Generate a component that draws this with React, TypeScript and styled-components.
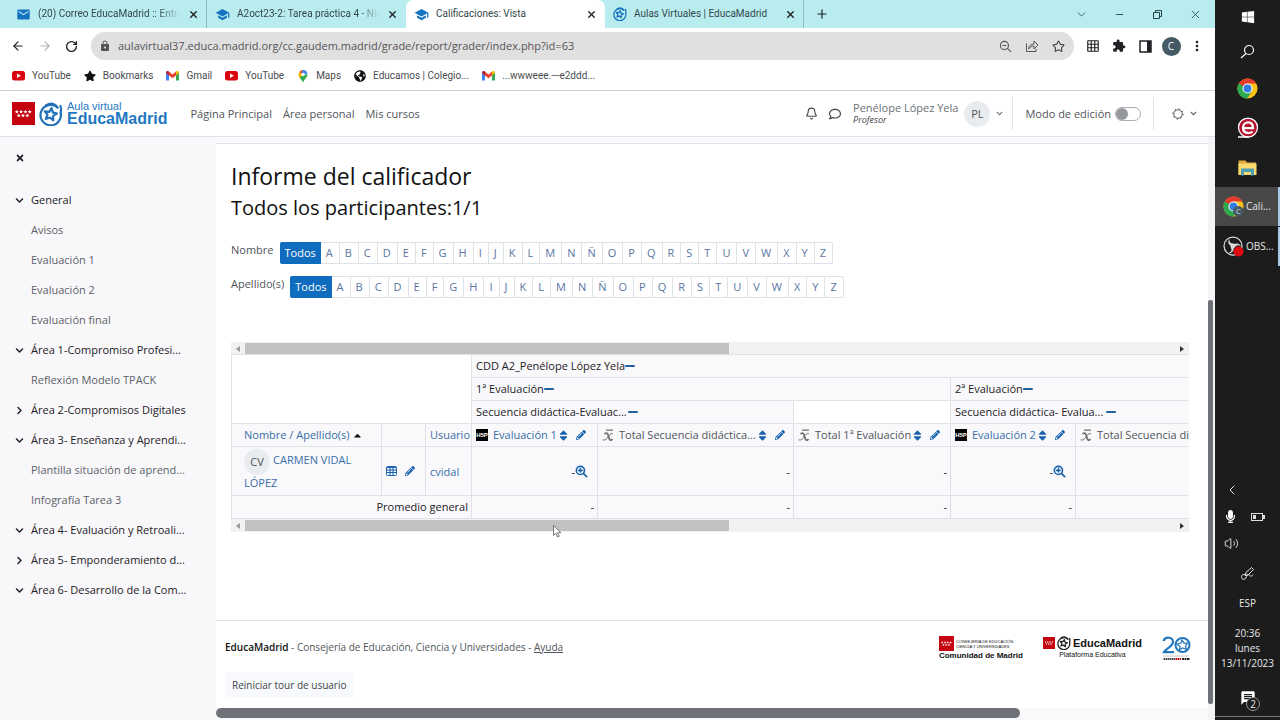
import React from "react";
import styled, { createGlobalStyle, css } from "styled-components";
import { ArrowLeft, ArrowRight, RotateCw, X, Plus, ChevronDown, ChevronLeft, Minus, Star, Bell, Volume2 } from "lucide-react";
import { FaWindows, FaPencilAlt, FaSort, FaCaretUp, FaTimes, FaRegComment, FaStar, FaMicrophone, FaChevronDown, FaChevronRight, FaGlobeAmericas } from "react-icons/fa";
import { MdLock, MdSchool, MdEmail, MdExtension, MdGridOn, MdMoreVert, MdMessage } from "react-icons/md";

const pageFont = `"Open Sans", "Noto Sans", sans-serif`;
const blue = "#0f6cbf";
const linkBlue = "#3a6ea8";
const line = "#dee2e6";

const Global = createGlobalStyle`
  * { box-sizing: border-box; }
  body { margin: 0; background: #fff; color: #1d2125; font: 11px/16px ${pageFont}; }
  a { color: inherit; text-decoration: none; }
  button { border: 0; padding: 0; background: none; color: inherit; font: inherit; cursor: pointer; }
  h1, h2, ul { margin: 0; padding: 0; font-weight: 400; list-style: none; }
  svg { display: block; flex: none; }
`;

const Desktop = styled.div`
  display: flex;
  min-height: 100vh;
`;
const Browser = styled.div`
  flex: 1;
  min-width: 0;
  display: flex;
  flex-direction: column;
`;

/* Browser chrome */
const TabStrip = styled.div`
  display: flex;
  height: 28px;
  padding: 0 1px 0 8px;
  background: #b9ecef;
`;
const Tab = styled.div<{ $active?: boolean; $line?: boolean }>`
  flex: 0 1 199px;
  min-width: 0;
  display: flex;
  align-items: center;
  gap: 7px;
  padding: 0 8px;
  color: #34474b;
  font-size: 10px;
  font-family: Roboto, sans-serif;
  ${p => p.$active && css`background: #fff; border-radius: 7px 7px 0 0;`}
  ${p => p.$line && css`box-shadow: inset -1px 0 #8fb9bd;`}
`;
const TabTitle = styled.span<{ $fade?: boolean }>`
  flex: 1;
  overflow: hidden;
  white-space: nowrap;
  ${p => p.$fade && css`mask-image: linear-gradient(90deg, #000 84%, transparent);`}
`;
const NewTab = styled.button`
  width: 36px;
  display: grid;
  place-items: center;
`;
const WindowButtons = styled.div`
  display: flex;
  margin-left: auto;
`;
const WindowButton = styled.button`
  width: 38px;
  display: grid;
  place-items: center;
  color: #24454a;
`;
const Toolbar = styled.div`
  display: flex;
  align-items: center;
  height: 36px;
  padding: 0 5px 0 11px;
  gap: 13px;
`;
const Extensions = styled.div`
  display: grid;
  grid-template-columns: repeat(5, 26px);
  place-items: center;
  margin-left: -7px;
`;
const Omnibox = styled.label`
  flex: 1;
  display: flex;
  align-items: center;
  gap: 7px;
  height: 28px;
  padding: 0 9px 0 8px;
  border-radius: 14px;
  background: #e0e0e1;
  color: #555;
`;
const UrlInput = styled.input`
  flex: 1;
  min-width: 0;
  border: 0;
  padding: 0;
  outline: 0;
  background: none;
  color: #555;
  font: 11px/16px ${pageFont};
`;
const OmniActions = styled.div`
  display: flex;
  gap: 13px;
`;
const IconButton = styled.button<{ $color?: string }>`
  display: grid;
  place-items: center;
  color: ${p => p.$color || "#202124"};
`;
const Profile = styled.button`
  width: 19px;
  height: 19px;
  border-radius: 50%;
  background: #455a64;
  color: #fff;
  font-size: 10px;
`;
const Bookmarks = styled.nav`
  display: flex;
  align-items: center;
  gap: 13px;
  height: 27px;
  padding: 0 0 2px 12px;
  border-bottom: 1px solid #d0d0d0;
`;
const Bookmark = styled.a`
  display: flex;
  align-items: center;
  gap: 7px;
  font: 10px/16px Roboto, sans-serif;
  color: #4a4c50;
  white-space: nowrap;
`;

/* Site header */
const SiteHeader = styled.header`
  display: flex;
  align-items: center;
  height: 46px;
  padding: 0 18px 0 12px;
  border-bottom: 1px solid ${line};
  color: #50555a;
`;
const Brand = styled.a`
  display: flex;
  align-items: center;
  gap: 4px;
  color: #1f78c4;
  font-family: "Liberation Sans", Arial, sans-serif;
`;
const BrandText = styled.span`
  display: grid;
  font-size: 11px;
  line-height: 11px;
  b { font-size: 16px; line-height: 14px; }
`;
const MainNav = styled.nav`
  display: flex;
  gap: 11px;
  margin-left: 23px;
`;
const UserArea = styled.div`
  display: flex;
  align-items: center;
  margin-left: auto;
`;
const Notices = styled.div`
  display: flex;
  gap: 11px;
  margin-right: 12px;
`;
const UserMenu = styled.button`
  display: flex;
  align-items: center;
  gap: 6px;
  padding-right: 9px;
  text-align: left;
  color: #6a6f75;
`;
const UserName = styled.span`
  display: grid;
  line-height: 12px;
  i { font-size: 9px; line-height: 11px; color: #40454a; }
`;
const Avatar = styled.span`
  display: inline-grid;
  place-items: center;
  width: 26px;
  height: 26px;
  border-radius: 50%;
  background: #e9ecef;
  color: #50555a;
`;
const HeaderGroup = styled.div`
  display: flex;
  align-items: center;
  gap: 6px;
  height: 33px;
  padding: 0 12px;
  border-left: 1px solid ${line};
  &:last-child { padding: 0 0 0 18px; }
`;
const ModeLabel = styled.label`
  display: flex;
  align-items: center;
  gap: 4px;
`;
const Toggle = styled.input`
  appearance: none;
  display: flex;
  width: 26px;
  height: 14px;
  margin: 0;
  border: 1px solid #a9adb1;
  border-radius: 7px;
  &::before { content: ""; width: 12px; height: 12px; border-radius: 50%; background: #96999c; }
`;

/* Page */
const Body = styled.div`
  flex: 1;
  display: flex;
  background: #f9f9fc;
`;
const Sidebar = styled.aside`
  width: 212px;
  flex: none;
  padding: 16px 15px 0;
  background: #f8f8fa;
`;
const CloseDrawer = styled.button`
  display: block;
`;
const Tree = styled.ul`
  margin-top: 22px;
`;
const TreeRow = styled.li<{ $section?: boolean }>`
  display: flex;
  align-items: center;
  height: 30px;
  gap: 7px;
  padding-left: ${p => (p.$section ? 0 : 16)}px;
  color: ${p => (p.$section ? "#1d2125" : "#5d6268")};
  white-space: nowrap;
`;
const Main = styled.main`
  flex: 1;
  min-width: 0;
  display: flex;
  flex-direction: column;
  margin: 6px 0 0 4px;
  border-top: 1px solid ${line};
  background: #fff;
`;
const Report = styled.section`
  flex: 1;
  padding: 16px 19px 20px 15px;
`;
const Title = styled.h1`
  font-size: 23px;
  line-height: 33px;
  color: #111;
`;
const Subtitle = styled.h2`
  font-size: 20px;
  line-height: 29px;
  color: #111;
`;
const Initials = styled.div`
  display: grid;
  gap: 12px;
  margin: 20px 0 44px;
`;
const InitialRow = styled.nav`
  display: flex;
  gap: 6px;
  color: #50555a;
`;
const Letters = styled.ul`
  display: flex;
  border: 1px solid ${line};
  border-left: 0;
  border-radius: 2px;
  height: 22px;
`;
const Letter = styled.a<{ $on?: boolean }>`
  display: block;
  margin: ${p => (p.$on ? "-1px 0" : "0")};
  padding: ${p => (p.$on ? "3px 5px" : "2px 6px 2px 5px")};
  border-right: ${p => (p.$on ? "0" : `1px solid ${line}`)};
  border-radius: ${p => (p.$on ? "2px 0 0 2px" : "0")};
  background: ${p => (p.$on ? blue : "transparent")};
  color: ${p => (p.$on ? "#fff" : "#5a75a0")};
  li:last-child & { border-right: 0; }
`;

/* Grade table */
const Track = styled.div`
  display: flex;
  align-items: center;
  height: 13px;
  padding: 0 5px;
  background: #f1f1f1;
`;
const TrackRail = styled.div`
  flex: 1;
  margin: 0 5px;
`;
const TrackThumb = styled.div`
  width: 52%;
  height: 11px;
  background: #c1c1c1;
`;
const TableClip = styled.div`
  overflow: hidden;
  margin-top: -1px;
`;
const Grades = styled.table`
  table-layout: fixed;
  width: 1040px;
  border-collapse: collapse;
  tr { background: #f9f9fb; }
`;
const Cell = styled.td<{ $blank?: boolean; $right?: boolean; $wide?: boolean }>`
  height: 23px;
  padding: 0 ${p => (p.$right ? 3 : 4)}px 0 ${p => (p.$wide ? 12 : 4)}px;
  border: 1px solid ${line};
  background: ${p => (p.$blank ? "#fff" : "transparent")};
  font-weight: 400;
  text-align: ${p => (p.$right ? "right" : "left")};
  white-space: nowrap;
  color: #1d2125;
`;
const TallCell = styled(Cell)`
  height: 49px;
  line-height: 21px;
  white-space: normal;
`;
const Inline = styled.span<{ $gap?: number }>`
  display: flex;
  align-items: center;
  gap: ${p => p.$gap || 0}px;
  color: #50555a;
`;
const HeadText = styled.span<{ $gap?: number }>`
  display: flex;
  align-items: center;
  gap: ${p => p.$gap || 0}px;
  color: #1d2125;
`;
const Link = styled.a`
  color: ${linkBlue};
`;
const BlueButton = styled.button`
  color: #1662ad;
`;
const SmallAvatar = styled(Avatar)`
  margin: -3px 3px -3px 0;
  vertical-align: middle;
`;
const ZoomSlot = styled.span`
  display: flex;
  align-items: center;
  justify-content: flex-end;
  padding-right: 5px;
`;
const H5P = styled.span`
  width: 12px;
  height: 12px;
  margin-right: 5px;
  background: #000;
  color: #fff;
  font: bold 6px/12px "Liberation Sans", sans-serif;
  text-align: center;
`;
const MeanSlot = styled.span`
  margin-right: 5px;
`;
const ColumnTools = styled.span`
  display: flex;
  align-items: center;
  gap: 6px;
`;
const Pointer = styled.svg`
  position: absolute;
  left: 322px;
  bottom: -6px;
`;
const TableBlock = styled.div`
  position: relative;
`;

/* Footer */
const Footer = styled.footer`
  display: flex;
  justify-content: space-between;
  height: 88px;
  padding: 15px 17px 0 9px;
  border-top: 1px solid ${line};
  color: #50555a;
  font-size: 10px;
`;
const FooterInfo = styled.div`
  b { color: #111; font-weight: 600; }
  a { text-decoration: underline; }
`;
const FooterLine = styled.div`
  padding: 3px 0 17px;
`;
const TourButton = styled.button`
  height: 25px;
  padding: 0 7px;
  background: #f8f9fc;
  color: #40454a;
`;
const Logos = styled.div`
  display: flex;
  align-items: flex-start;
  gap: 20px;
  font-family: "Liberation Sans", Arial, sans-serif;
  color: #111;
`;
const Logo = styled.a<{ $start?: boolean }>`
  display: grid;
  justify-items: ${p => (p.$start ? "start" : "center")};
`;
const LogoRow = styled.span<{ $size?: number }>`
  display: flex;
  align-items: center;
  gap: 2px;
  font-size: ${p => p.$size || 11}px;
  line-height: 5px;
`;
const LogoCaption = styled.span<{ $size: number; $bold?: boolean }>`
  font-size: ${p => p.$size}px;
  line-height: 10px;
  font-weight: ${p => (p.$bold ? 700 : 400)};
`;
const PageScroll = styled.div`
  height: 12px;
  padding-bottom: 2px;
  background: #f9f9fc;
`;
const PageScrollThumb = styled.div`
  width: 81%;
  height: 10px;
  border-radius: 5px;
  background: #6f7178;
`;
const SideScroll = styled.div`
  width: 7px;
  display: flex;
  flex-direction: column;
  padding-right: 2px;
  background: #f4f4f6;
  &::before { content: ""; flex: 163; }
  &::after { content: ""; flex: 16; }
`;
const SideThumb = styled.div`
  flex: 404;
  border-radius: 2px;
  background: #6f7178;
`;

/* Taskbar */
const Taskbar = styled.aside`
  width: 65px;
  flex: none;
  display: flex;
  flex-direction: column;
  background: #1c1c1c;
  color: #e8e8e8;
  font-size: 10px;
  line-height: 15px;
  text-align: center;
`;
const TaskButton = styled.button<{ $h: number }>`
  display: grid;
  place-items: center;
  height: ${p => p.$h}px;
`;
const RunningTask = styled.button<{ $active?: boolean }>`
  display: flex;
  align-items: center;
  gap: 2px;
  height: 39px;
  padding-left: 8px;
  background: ${p => (p.$active ? "#484848" : "transparent")};
  border-right: 2px solid #a9c7e6;
  margin-bottom: 1px;
`;
const Tray = styled.div`
  display: flex;
  flex-direction: column;
  margin-top: auto;
  border-bottom: 1px solid #777;
  margin-bottom: 3px;
`;
const TrayRow = styled.div<{ $h: number }>`
  display: flex;
  align-items: center;
  gap: 14px;
  height: ${p => p.$h}px;
  padding-left: 9px;
`;
const TrayCenter = styled(TrayRow)`
  justify-content: center;
  padding: 0;
`;
const NoticeButton = styled.button`
  position: relative;
  display: grid;
  place-items: center;
  height: 36px;
`;
const NoticeCount = styled.span`
  position: absolute;
  left: 31px;
  top: 17px;
  width: 14px;
  height: 14px;
  border: 1px solid #999;
  border-radius: 50%;
  background: #1c1c1c;
  line-height: 12px;
`;

const YouTube = () => (
  <svg width="13" height="10" viewBox="0 0 26 20"><rect width="26" height="19" rx="5" fill="#d9040f" /><path d="M10 5l8 4.500-8 4.500z" fill="#fff" /></svg>
);
const Gmail = () => (
  <svg width="13" height="10" viewBox="0 0 26 20">
    <path d="M0 3v16h6V8z" fill="#4285f4" /><path d="M26 3v16h-6V8z" fill="#34a853" />
    <path d="M6 1l7 6 7-6v8l-7 5.500L6 9z" fill="#ea4335" /><path d="M0 3c0-3 3-4 6-2v8L0 4z" fill="#b5202a" /><path d="M26 3c0-3-3-4-6-2v8l6-5z" fill="#fbbc04" />
  </svg>
);
const MapPin = () => (
  <svg width="12" height="13" viewBox="0 0 24 26">
    <path d="M12 26C11 19 3 16 3 9h18c0 7-8 10-9 17z" fill="#34a853" /><path d="M3 9a9 9 0 0 1 3-6l6 6-7 7C4 14 3 12 3 9z" fill="#fbbc04" />
    <path d="M5 4a9 9 0 0 1 8-4l-4 8z" fill="#ea4335" /><path d="M12 0a9 9 0 0 1 9 8l-9 2-3-3z" fill="#4285f4" /><circle cx="12" cy="9" r="3.500" fill="#fff" />
  </svg>
);
const StarRing = ({ size, color }: { size: number; color: string }) => (
  <svg width={size} height={size} viewBox="0 0 24 24" fill="none" stroke={color} strokeWidth="2.200" strokeLinejoin="round" strokeLinecap="round">
    <path d="M18.500 5.500A10.200 10.200 0 1 0 21.700 11" /><path d="M7 3.300C12 .5 16.500 1.500 18.500 5.500M21.700 11c.8-3 .5-5-.2-7" />
    <path d="M12.600 6.100L13.700 10.400 17.900 11.600 14.100 13.900 14.300 18.300 11 15.500 6.800 17 8.500 12.900 5.800 9.400 10.200 9.800z" />
  </svg>
);
const MadridFlag = ({ size }: { size: number }) => (
  <svg width={size} height={size} viewBox="0 0 24 24">
    <rect width="24" height="24" fill="#c4040f" />
    <g fill="#fff">{[5, 9.5, 14, 18.5].map(x => <path key={x} d={`M${x} 8l.6 1.400 1.500.1-1.200 1 .4 1.500-1.300-.8-1.300.8.4-1.500-1.200-1 1.500-.1z`} />)}
      {[7, 11.5, 16].map(x => <path key={x} d={`M${x} 12l.6 1.400 1.500.1-1.200 1 .4 1.500-1.300-.8-1.300.8.4-1.500-1.200-1 1.500-.1z`} />)}</g>
  </svg>
);
const ChromeLogo = ({ badge }: { badge?: boolean }) => (
  <svg width="21" height="21" viewBox="0 0 48 48">
    <circle cx="24" cy="24" r="23" fill="#fbc116" />
    <path d="M24 24L4.100 12.500A23 23 0 0 1 43.900 12.500H24z" fill="#e33b2e" />
    <path d="M4.100 12.500L14 30l10-6V12.500z" fill="#e33b2e" /><path d="M4.100 12.500A23 23 0 0 0 24 47l9.500-17z" fill="#2da94f" />
    <circle cx="24" cy="24" r="11.500" fill="#fff" /><circle cx="24" cy="24" r="9" fill="#2f7de1" />
    {badge && <><circle cx="35" cy="35" r="12" fill="#455a64" /><text x="35" y="41" textAnchor="middle" fontSize="17" fill="#cde" fontFamily="Open Sans">C</text></>}
  </svg>
);
const ELogo = () => (
  <svg width="22" height="22" viewBox="0 0 44 44" fill="none">
    <circle cx="22" cy="21" r="19" fill="#b5122b" stroke="#fff" strokeWidth="2.500" />
    <path d="M12 22h20c0-8-4-11.500-9.500-11.500S12 15 12 21.500 16 32 23 32c4 0 6-1 8-3" stroke="#fff" strokeWidth="4.500" /><path d="M2 40h22" stroke="#fff" strokeWidth="3" />
  </svg>
);
const Folder = () => (
  <svg width="19" height="17" viewBox="0 0 38 34">
    <path d="M1 3h14l3 4h18v24H1z" fill="#e2a93b" /><path d="M1 9h36v23H1z" fill="#fbd96f" />
    <path d="M6 19h26v14h-6v-7H12v7H6z" fill="#4f9fae" />
  </svg>
);
const ObsLogo = () => (
  <svg width="21" height="21" viewBox="0 0 42 42">
    <circle cx="20" cy="20" r="18" fill="#1c1c1c" stroke="#ddd" strokeWidth="2.500" />
    <g fill="#ddd"><path d="M20 20c-9 0-12-8-7-14-1 6 2 9 7 9 4 0 7 3 7 6-2-2-5-2-7-1z" /><path d="M20 20c5-8 13-6 16 1-5-4-9-3-12 1-2 3-5 4-8 3 2-1 4-3 4-5z" /><path d="M20 20c4 8-1 15-9 14 6-2 7-6 5-10-2-4-1-7 1-9 0 2 1 4 3 5z" /></g>
    <circle cx="31" cy="31" r="10" fill="#e00b12" />
  </svg>
);
const Magnifier = ({ mark, size, width }: { mark: "plus" | "minus"; size: number; width: number }) => (
  <svg width={size} height={size} viewBox="0 0 24 24" fill="none" stroke="currentColor" strokeWidth={width} strokeLinecap="round">
    <circle cx="10" cy="10" r="7.500" /><path d="M15.500 15.500l6 6M7 10h6" />{mark === "plus" && <path d="M10 7v6" />}
  </svg>
);
const Share = () => (
  <svg width="14" height="14" viewBox="0 0 28 28" fill="none" stroke="currentColor" strokeWidth="2" strokeLinejoin="round"><path d="M3 9v16h19v-5" /><path d="M7 20c1-7 5-10 11-10V4l8 8-8 8v-6c-5 0-8 2-11 6z" /></svg>
);
const SidePanel = () => (
  <svg width="13" height="13" viewBox="0 0 13 13"><rect x="1" y="1" width="11" height="11" fill="none" stroke="#202124" strokeWidth="1.500" /><path d="M8 1h4v11H8z" fill="#202124" /></svg>
);
const Restore = () => (
  <svg width="9" height="9" viewBox="0 0 9 9" fill="none" stroke="currentColor"><path d="M.5 2.500h6v6h-6zM2.500 2.500v-2h6v6h-2" /></svg>
);
const Sun = () => (
  <svg width="12" height="12" viewBox="0 0 24 24" fill="none" stroke="#50555a" strokeWidth="2"><circle cx="12" cy="12" r="8.500" /><circle cx="12" cy="12" r="10.500" strokeDasharray="2.500 5.750" /></svg>
);
const Mean = () => (
  <svg width="12" height="14" viewBox="0 0 24 28" fill="none" stroke="#6e6e6e" strokeLinecap="round">
    <path d="M9 4h12" strokeWidth="2.500" /><path d="M6 11c5-2 6 1 7.500 7s2.500 8 6.500 5" strokeWidth="3.500" /><path d="M21 11c-4-1-6 3-9 7s-5 7-10 6" strokeWidth="2" />
  </svg>
);
const GridIcon = () => (
  <svg width="11" height="10" viewBox="0 0 11 10" fill="none" stroke="currentColor"><rect x=".5" y=".5" width="10" height="9" rx="1" /><path d="M1 1.500h9M1 4h9M1 6.500h9M4 1v8M7 1v8" /></svg>
);
const Arrow = ({ right }: { right?: boolean }) => (
  <svg width="4" height="6" viewBox="0 0 4 6"><path d={right ? "M0 0l4 3-4 3z" : "M4 0L0 3l4 3z"} fill={right ? "#333" : "#999"} /></svg>
);
const Dash = () => <svg width="10" height="3" viewBox="0 0 10 3"><rect width="10" height="2" rx="1" fill="#2360a0" /></svg>;
const Twenty = () => (
  <svg width="29" height="25" viewBox="0 0 58 50" fill="none" stroke="#2478bd">
    <path d="M3 10C6 1 22 1 22 12c0 8-15 14-18 20h20" strokeWidth="4.500" />
    <circle cx="41" cy="18" r="14" strokeWidth="4" /><path d="M40 8l4 6 7 0-4 6 2 7-8-3-6 4 1-7-6-5 8-2z" strokeWidth="2.500" />
    <path d="M3 40h52" stroke="#666" strokeWidth="1.500" strokeDasharray="2 2" /><path d="M3 46h23" stroke="#444" strokeWidth="4" strokeDasharray="3 1" /><path d="M27 46h12" stroke="#c4040f" strokeWidth="4" strokeDasharray="3 1" /><path d="M40 46h16" stroke="#222" strokeWidth="4" strokeDasharray="4 1" />
  </svg>
);
const PenTray = () => (
  <svg width="15" height="15" viewBox="0 0 30 30" fill="none" stroke="currentColor" strokeWidth="2"><path d="M10 19l2-6L23 3l4 4-10 10-7 2zM13 20c-4-6-11-3-10 3s9 4 10-2c1-4 5-5 7-2s4 1 6-2" /></svg>
);

const alphabet = "ABCDEFGHIJKLMNÑOPQRSTUVWXYZ".split("");
const tree: [string, "down" | "right" | null][] = [
  ["General", "down"], ["Avisos", null], ["Evaluación 1", null], ["Evaluación 2", null], ["Evaluación final", null],
  ["Área 1-Compromiso Profesi...", "down"], ["Reflexión Modelo TPACK", null], ["Área 2-Compromisos Digitales", "right"],
  ["Área 3- Enseñanza y Aprendi...", "down"], ["Plantilla situación de aprend...", null], ["Infografía Tarea 3", null],
  ["Área 4- Evaluación y Retroali...", "down"], ["Área 5- Emponderamiento d...", "right"], ["Área 6- Desarrollo de la Com...", "down"],
];

const InitialBar = ({ label }: { label: string }) => (
  <InitialRow aria-label={label}>
    <span>{label}</span>
    <Letters>
      <li><Letter href="#todos" $on>Todos</Letter></li>
      {alphabet.map(l => <li key={l}><Letter href={`#${l}`}>{l}</Letter></li>)}
    </Letters>
  </InitialRow>
);
const ScrollTrack = () => (
  <Track><Arrow /><TrackRail><TrackThumb /></TrackRail><Arrow right /></Track>
);
const CloseTab = () => <IconButton aria-label="Cerrar"><X size={11} strokeWidth={3} /></IconButton>;
const Tools = () => (
  <ColumnTools>
    <BlueButton aria-label="Ordenar"><FaSort size={13} /></BlueButton>
    <BlueButton aria-label="Editar"><FaPencilAlt size={10} /></BlueButton>
  </ColumnTools>
);
const Activity = ({ name }: { name: string }) => (
  <Cell as="th"><Inline><H5P>H5P</H5P><Link href="#actividad">{name}</Link><Tools /></Inline></Cell>
);
const Total = ({ name }: { name: string }) => (
  <Cell as="th"><Inline><MeanSlot><Mean /></MeanSlot>{name}<Tools /></Inline></Cell>
);
const Category = ({ name, span, gap }: { name: string; span: number; gap?: number }) => (
  <Cell as="th" colSpan={span}><HeadText $gap={gap}>{name}<BlueButton aria-label="Contraer"><Dash /></BlueButton></HeadText></Cell>
);
const ZoomGrade = () => (
  <TallCell><ZoomSlot>-<BlueButton aria-label="Análisis"><Magnifier mark="plus" size={13} width={3} /></BlueButton></ZoomSlot></TallCell>
);

export default function App() {
  return (
    <Desktop>
      <Global />
      <Browser>
        <TabStrip>
          <Tab $line><MdEmail size={15} color="#1673c0" /><TabTitle $fade>(20) Correo EducaMadrid :: Entrada</TabTitle><CloseTab /></Tab>
          <Tab><MdSchool size={15} color="#1673c0" /><TabTitle $fade>A2oct23-2: Tarea práctica 4 - Nivel</TabTitle><CloseTab /></Tab>
          <Tab $active><MdSchool size={15} color="#1673c0" /><TabTitle>Calificaciones: Vista</TabTitle><CloseTab /></Tab>
          <Tab $line><StarRing size={14} color="#1673c0" /><TabTitle>Aulas Virtuales | EducaMadrid</TabTitle><CloseTab /></Tab>
          <NewTab aria-label="Nueva pestaña"><Plus size={14} /></NewTab>
          <WindowButtons>
            <WindowButton aria-label="Buscar pestañas"><ChevronDown size={13} strokeWidth={1.5} /></WindowButton>
            <WindowButton aria-label="Minimizar"><Minus size={11} strokeWidth={2} /></WindowButton>
            <WindowButton aria-label="Restaurar"><Restore /></WindowButton>
            <WindowButton aria-label="Cerrar ventana"><X size={13} strokeWidth={1.5} /></WindowButton>
          </WindowButtons>
        </TabStrip>
        <Toolbar>
          <IconButton aria-label="Atrás"><ArrowLeft size={14} /></IconButton>
          <IconButton aria-label="Adelante" $color="#b0b0b0"><ArrowRight size={14} /></IconButton>
          <IconButton aria-label="Recargar"><RotateCw size={13} strokeWidth={2.5} /></IconButton>
          <Omnibox>
            <MdLock size={12} />
            <UrlInput aria-label="Dirección" defaultValue="aulavirtual37.educa.madrid.org/cc.gaudem.madrid/grade/report/grader/index.php?id=63" />
            <OmniActions>
              <IconButton aria-label="Zoom" $color="#555"><Magnifier mark="minus" size={13} width={2} /></IconButton>
              <IconButton aria-label="Compartir" $color="#555"><Share /></IconButton>
              <IconButton aria-label="Favorito" $color="#444"><Star size={13} /></IconButton>
            </OmniActions>
          </Omnibox>
          <Extensions>
            <IconButton aria-label="Cuadrícula"><MdGridOn size={14} /></IconButton>
            <IconButton aria-label="Extensiones"><MdExtension size={14} /></IconButton>
            <IconButton aria-label="Panel lateral"><SidePanel /></IconButton>
            <Profile>C</Profile>
            <IconButton aria-label="Menú"><MdMoreVert size={16} /></IconButton>
          </Extensions>
        </Toolbar>
        <Bookmarks>
          <Bookmark href="#yt"><YouTube />YouTube</Bookmark>
          <Bookmark href="#bm"><FaStar size={12} color="#111" />Bookmarks</Bookmark>
          <Bookmark href="#gm"><Gmail />Gmail</Bookmark>
          <Bookmark href="#yt2"><YouTube />YouTube</Bookmark>
          <Bookmark href="#maps"><MapPin />Maps</Bookmark>
          <Bookmark href="#edu"><FaGlobeAmericas size={12} color="#111" />Educamos | Colegio...</Bookmark>
          <Bookmark href="#mail"><Gmail />...wwweee.---e2ddd...</Bookmark>
        </Bookmarks>
        <SiteHeader>
          <Brand href="#inicio">
            <MadridFlag size={23} /><StarRing size={24} color="#2372b8" />
            <BrandText>Aula virtual<b>EducaMadrid</b></BrandText>
          </Brand>
          <MainNav><a href="#principal">Página Principal</a><a href="#area">Área personal</a><a href="#cursos">Mis cursos</a></MainNav>
          <UserArea>
            <Notices>
              <IconButton aria-label="Notificaciones" $color="#444"><Bell size={13} /></IconButton>
              <IconButton aria-label="Mensajes" $color="#444"><FaRegComment size={12} /></IconButton>
            </Notices>
            <UserMenu><UserName>Penélope López Yela<i>Profesor</i></UserName><Avatar>PL</Avatar><FaChevronDown size={7} /></UserMenu>
            <HeaderGroup><ModeLabel>Modo de edición<Toggle type="checkbox" /></ModeLabel></HeaderGroup>
            <HeaderGroup><Sun /><FaChevronDown size={7} /></HeaderGroup>
          </UserArea>
        </SiteHeader>
        <Body>
          <Sidebar>
            <CloseDrawer aria-label="Cerrar índice"><FaTimes size={10} /></CloseDrawer>
            <Tree>
              {tree.map(([name, open]) => (
                <TreeRow key={name} $section={!!open}>
                  {open === "down" && <FaChevronDown size={9} />}
                  {open === "right" && <FaChevronRight size={9} />}
                  <a href="#seccion">{name}</a>
                </TreeRow>
              ))}
            </Tree>
          </Sidebar>
          <Main>
            <Report>
              <Title>Informe del calificador</Title>
              <Subtitle>Todos los participantes:1/1</Subtitle>
              <Initials><InitialBar label="Nombre" /><InitialBar label="Apellido(s)" /></Initials>
              <TableBlock>
                <ScrollTrack />
                <TableClip>
                  <Grades>
                    <colgroup>
                      {[150, 44, 46, 126, 196, 157, 125, 196].map((w, i) => <col key={i} width={w} />)}
                    </colgroup>
                    <thead>
                      <tr><Cell $blank colSpan={3} rowSpan={3} /><Category name="CDD A2_Penélope López Yela" span={5} /></tr>
                      <tr><Category name="1ª Evaluación" span={3} /><Category name="2ª Evaluación" span={2} /></tr>
                      <tr><Category name="Secuencia didáctica-Evaluac..." span={2} gap={1} /><Cell $blank /><Category name="Secuencia didáctica- Evalua..." span={2} gap={3} /></tr>
                      <tr>
                        <Cell as="th" $wide><Inline $gap={2}><Link href="#orden">Nombre / Apellido(s)</Link><FaCaretUp size={11} color="#111" /></Inline></Cell>
                        <Cell as="th" />
                        <Cell as="th"><Link href="#usuario">Usuario</Link></Cell>
                        <Activity name="Evaluación 1" /><Total name="Total Secuencia didáctica..." /><Total name="Total 1ª Evaluación" />
                        <Activity name="Evaluación 2" /><Total name="Total Secuencia didáctica..." />
                      </tr>
                    </thead>
                    <tbody>
                      <tr>
                        <TallCell as="th" $wide><Link href="#alumna"><SmallAvatar>CV</SmallAvatar>CARMEN VIDAL LÓPEZ</Link></TallCell>
                        <TallCell><Inline $gap={8}><BlueButton aria-label="Informe"><GridIcon /></BlueButton><BlueButton aria-label="Editar"><FaPencilAlt size={10} /></BlueButton></Inline></TallCell>
                        <TallCell><Link href="#cvidal">cvidal</Link></TallCell>
                        <ZoomGrade /><TallCell $right>-</TallCell><TallCell $right>-</TallCell><ZoomGrade /><TallCell $right>-</TallCell>
                      </tr>
                      <tr>
                        <Cell as="th" colSpan={3} $right>Promedio general</Cell>
                        {[1, 2, 3, 4, 5].map(i => <Cell key={i} $right>-</Cell>)}
                      </tr>
                    </tbody>
                  </Grades>
                </TableClip>
                <ScrollTrack />
                <Pointer width="9" height="13" viewBox="0 0 9 13"><path d="M.5.5v10l2.400-2.200 1.700 3.700 1.600-.7-1.700-3.600h3.500z" fill="#fff" stroke="#777" /></Pointer>
              </TableBlock>
            </Report>
            <Footer>
              <FooterInfo>
                <FooterLine><b>EducaMadrid</b> - Consejería de Educación, Ciencia y Universidades - <a href="#ayuda">Ayuda</a></FooterLine>
                <TourButton>Reiniciar tour de usuario</TourButton>
              </FooterInfo>
              <Logos>
                <Logo href="#comunidad" $start>
                  <LogoRow $size={4}><MadridFlag size={15} /><span>CONSEJERÍA DE EDUCACIÓN,<br />CIENCIA Y UNIVERSIDADES</span></LogoRow>
                  <LogoCaption $size={8} $bold>Comunidad de Madrid</LogoCaption>
                </Logo>
                <Logo href="#educamadrid">
                  <LogoRow><MadridFlag size={12} /><StarRing size={14} color="#222" /><b>EducaMadrid</b></LogoRow>
                  <LogoCaption $size={7}>Plataforma Educativa</LogoCaption>
                </Logo>
                <Logo href="#aniversario" aria-label="20 aniversario"><Twenty /></Logo>
              </Logos>
            </Footer>
            <PageScroll><PageScrollThumb /></PageScroll>
          </Main>
          <SideScroll><SideThumb /></SideScroll>
        </Body>
      </Browser>
      <Taskbar>
        <TaskButton $h={33} aria-label="Inicio"><FaWindows size={14} color="#fff" /></TaskButton>
        <TaskButton $h={36} aria-label="Buscar"><svg width="15" height="15" viewBox="0 0 15 15" fill="none" stroke="#fff" strokeWidth="1.200"><circle cx="9" cy="6" r="4.500" /><path d="M6 9.500L1 14" /></svg></TaskButton>
        <TaskButton $h={39} aria-label="Chrome"><ChromeLogo /></TaskButton>
        <TaskButton $h={39} aria-label="Aplicación"><ELogo /></TaskButton>
        <TaskButton $h={40} aria-label="Explorador"><Folder /></TaskButton>
        <RunningTask $active><ChromeLogo badge />Cali...</RunningTask>
        <RunningTask><ObsLogo />OBS...</RunningTask>
        <Tray>
          <TrayRow $h={27}><ChevronLeft size={16} strokeWidth={1.5} /></TrayRow>
          <TrayRow $h={27}><FaMicrophone size={13} color="#fff" /><svg width="14" height="8" viewBox="0 0 14 8"><rect x=".5" y=".5" width="11" height="7" fill="none" stroke="#ddd" /><path d="M2 2h3v4H2zM12 2h2v4h-2z" fill="#ddd" /></svg></TrayRow>
          <TrayRow $h={27}><Volume2 size={15} strokeWidth={1.5} /></TrayRow>
          <TrayCenter $h={33}><PenTray /></TrayCenter>
          <TrayCenter $h={27}>ESP</TrayCenter>
          <TrayCenter $h={63}><span>20:36<br />lunes<br />13/11/2023</span></TrayCenter>
          <NoticeButton aria-label="Notificaciones"><MdMessage size={16} color="#fff" /><NoticeCount>2</NoticeCount></NoticeButton>
        </Tray>
      </Taskbar>
    </Desktop>
  );
}
